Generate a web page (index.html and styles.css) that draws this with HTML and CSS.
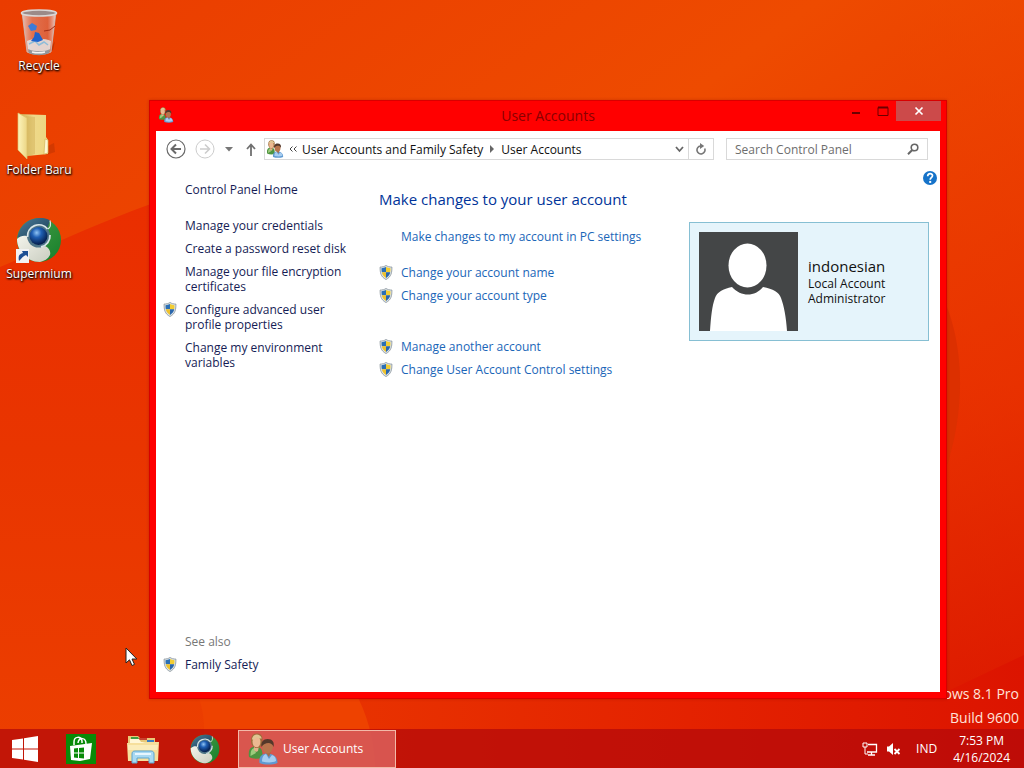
FILE: index.html
```html
<!DOCTYPE html>
<html lang="en">
<head>
  <meta charset="UTF-8" />
  <title>User Accounts</title>
  <link rel="stylesheet" href="styles.css">
</head>
<body>

  <!-- shared icons -->
  <svg class="sprite" aria-hidden="true">
    <defs>
      <radialGradient id="ball" cx="40%" cy="32%" r="65%">
        <stop offset="0" stop-color="#8fc4f5" />
        <stop offset="0.4" stop-color="#1f5fb4" />
        <stop offset="1" stop-color="#06204f" />
      </radialGradient>
      <linearGradient id="globe-top" x1="0" y1="0" x2="1" y2="1">
        <stop offset="0" stop-color="#4c7d9b" />
        <stop offset="1" stop-color="#16384f" />
      </linearGradient>
      <linearGradient id="globe-green" x1="0" y1="0" x2="1" y2="1">
        <stop offset="0" stop-color="#4f9e4a" />
        <stop offset="1" stop-color="#14802a" />
      </linearGradient>
      <linearGradient id="globe-white" x1="0" y1="0" x2="1" y2="1">
        <stop offset="0" stop-color="#f4f4ec" />
        <stop offset="1" stop-color="#c9cdc0" />
      </linearGradient>
      <linearGradient id="folder-front" x1="0" y1="0" x2="1" y2="0">
        <stop offset="0" stop-color="#fdf4bc" />
        <stop offset="1" stop-color="#ecd684" />
      </linearGradient>
      <linearGradient id="folder-back" x1="0" y1="0" x2="1" y2="0">
        <stop offset="0" stop-color="#c9a94c" />
        <stop offset="0.5" stop-color="#efd98a" />
        <stop offset="1" stop-color="#ecd680" />
      </linearGradient>
      <linearGradient id="bin-side" x1="0" y1="0" x2="1" y2="0">
        <stop offset="0" stop-color="#e9e4e4" stop-opacity="0.8" />
        <stop offset="0.3" stop-color="#d8a8a0" stop-opacity="0.5" />
        <stop offset="0.75" stop-color="#d08a80" stop-opacity="0.45" />
        <stop offset="1" stop-color="#f0eeee" stop-opacity="0.85" />
      </linearGradient>
    </defs>

    <symbol id="shield" viewBox="0 0 14 16">
      <path d="M7 .5C5.300 1.700 3.200 2.200.7 2.200c0 6 .6 10.300 6.300 13.300 5.700-3 6.300-7.300 6.300-13.300C10.800 2.200 8.700 1.700 7 .5z" fill="#dfe6ea" stroke="#8b969d" stroke-width="0.9" />
      <path d="M7 2.200C5.500 3 4 3.400 2.200 3.500c0 1.600 0 3 .3 4.300H7z" fill="#2b6fb5" />
      <path d="M7 2.200c1.500.8 3 1.200 4.800 1.300 0 1.600 0 3-.3 4.300H7z" fill="#f2cd33" />
      <path d="M2.500 7.800H7v6C4.500 12.300 3 10.500 2.500 7.800z" fill="#eec12c" />
      <path d="M11.500 7.800H7v6c2.500-1.500 4-3.300 4.500-6z" fill="#2a66ab" />
    </symbol>

    <symbol id="users" viewBox="0 0 32 32">
      <path d="M2 24c-1-7 1-10 6-10.500 6 0 8 3 7.500 11.500C11 26 6 26 2 24z" fill="#4e9440" />
      <path d="M3.500 23c0-5 1-7 3.500-8l2 5z" fill="#9dcb7c" />
      <path d="M7 13h5l-1 5-2 1-2-2z" fill="#e2b08a" />
      <path d="M4 8c0-5 2-7.500 6-7.500S16 3 15.500 8.500C15.500 12 13.500 15 10 15S4 12 4 8z" fill="#a06c3a" />
      <ellipse cx="9.500" cy="8.800" rx="4" ry="5.500" fill="#ecb891" />
      <path d="M4.800 6.500c1-4 3-5 5-5s4 1 5 4c-3 0-4-.5-5-1.500-1 1.500-3 2.500-5 2.500z" fill="#dfc592" />
      <path d="M12.500 30c-1-6 2-9.500 8-9.500s10 3.500 10 9.500c-5 2-13 2-18 0z" fill="#5f9ad2" />
      <path d="M15 28.500c0-4 1-6.500 4-7.500l3 5 3-4c3 1 4 3 4 6-4 2-9 1.500-14 .5z" fill="#a8cdf0" />
      <path d="M18 18.500h6l-2 5.500z" fill="#a96a46" />
      <ellipse cx="20.500" cy="14" rx="5.300" ry="6.500" fill="#b8744c" />
      <path d="M14.500 14c-1-5 2-8 6-8 5 0 7 3 6 8-1-3-3-4-5-4-3 0-5 1-7 4z" fill="#54382a" />
    </symbol>

    <symbol id="supermium" viewBox="0 0 46 46">
      <circle cx="23" cy="23" r="22" fill="url(#globe-green)" />
      <path d="M1.500 20C4 7 14 1 24 1c4 0 7 .6 10 2.500L31 12c-7-6-17-2-18 6l-2 6c-4-1-7-2-9.500-4z" fill="url(#globe-top)" />
      <path d="M1 22c4-4 9-4 11-2 1 8 9 12 17 9 4 2 6 5 5 9-2 4-6 6-10 7C11 45 1 34 1 22z" fill="url(#globe-white)" />
      <circle cx="22.500" cy="19" r="11.500" fill="#4d7488" />
      <path d="M11.500 20a11.300 11.300 0 0 1 20-8M34 18a11.500 11.500 0 0 1-9 12" fill="none" stroke="#d9e5e8" stroke-width="1.800" />
      <circle cx="22.500" cy="19" r="9" fill="url(#ball)" />
      <path d="M32 12c3-2 3-5 2-8.500" fill="none" stroke="#d9e5e8" stroke-width="1.200" />
    </symbol>
  </svg>

  <div class="desktop">

    <svg class="wallpaper" viewBox="0 0 1024 768" preserveAspectRatio="none" aria-hidden="true">
      <defs>
        <linearGradient id="sky" x1="0" y1="0" x2="1" y2="1">
          <stop offset="0" stop-color="#ea3c00" />
          <stop offset="0.4" stop-color="#ee4b00" />
          <stop offset="0.75" stop-color="#e83200" />
          <stop offset="1" stop-color="#da1800" />
        </linearGradient>
        <linearGradient id="hill" x1="0" y1="0" x2="0" y2="1">
          <stop offset="0" stop-color="#ea2e00" />
          <stop offset="0.45" stop-color="#e93500" />
          <stop offset="1" stop-color="#ec3f00" />
        </linearGradient>
        <linearGradient id="right-side" x1="0" y1="0" x2="0" y2="1">
          <stop offset="0" stop-color="#ee4a00" />
          <stop offset="0.5" stop-color="#e83000" />
          <stop offset="1" stop-color="#da1000" />
        </linearGradient>
        <linearGradient id="floor" x1="0" y1="0" x2="1" y2="0">
          <stop offset="0" stop-color="#e83200" />
          <stop offset="0.5" stop-color="#e42200" />
          <stop offset="1" stop-color="#dc1400" />
        </linearGradient>
      </defs>
      <rect width="1024" height="768" fill="url(#sky)" />
      <path d="M0 267C50 246 95 224 148 205C300 160 500 200 600 400V768H0z" fill="url(#hill)" />
      <path d="M900 0h124v768H900z" fill="url(#right-side)" opacity="0.5" />
      <path d="M900 240C975 300 985 440 900 560z" fill="#dc3000" />
      <path d="M200 768C206 735 206 715 196 690H380V768z" fill="#ee4200" />
      <path d="M375 768C374 740 368 715 354 690H950L1024 655V768z" fill="url(#floor)" />
    </svg>

    <p class="watermark">Windows 8.1 Pro<br>Build 9600</p>

    <nav class="shortcuts">
      <a href="#" class="shortcut">
        <svg class="shortcut-icon" viewBox="0 0 48 48" aria-hidden="true">
          <path d="M33 45l5-3 2-9z" fill="#8c2200" opacity="0.4" />
          <path d="M7 4h34l-5 40c-6 3-18 3-24 0z" fill="url(#bin-side)" stroke="#c8c2c2" stroke-width="0.800" />
          <path d="M12 33c6-3 18-3 24 0l-1 9c-6 3-16 3-22 0z" fill="#e4e6e8" opacity="0.85" />
          <path d="M14 36l6-3 4 4 5-3 4 3" fill="none" stroke="#8fbcd8" stroke-width="1.500" />
          <path d="M13 18l4-3 5 3-1 4-5 1z" fill="#3b7bd8" />
          <path d="M20 24l4 1 4 7-5 2-7-1 3-4z" fill="#1f62cc" />
          <path d="M29 23l6-1 5-4" stroke="#a02c14" stroke-width="1" fill="none" />
          <ellipse cx="24" cy="5" rx="17.500" ry="3" fill="#9b8a88" stroke="#d9d7d7" stroke-width="1.600" />
          <path d="M13 41c6 3 17 3 22 0l-1 4c-5 3-15 3-20 0z" fill="#93969a" />
          <path d="M17 44c4 1 9 1 13 0" stroke="#f4f4f4" stroke-width="1.500" fill="none" />
        </svg>
        <span>Recycle</span>
      </a>
      <a href="#" class="shortcut">
        <svg class="shortcut-icon" viewBox="0 0 48 48" aria-hidden="true">
          <path d="M31 43l9-3-1-9-8 4z" fill="#8c2200" opacity="0.25" />
          <path d="M3 2l28 1v22l2 3v14l-21 2z" fill="url(#folder-back)" />
          <path d="M11 4l9 1v37l-9 3z" fill="#cfae55" opacity="0.45" />
          <path d="M3 1l9 5v41L3 38z" fill="url(#folder-front)" stroke="#dcc06a" stroke-width="0.700" />
          <path d="M30 27l3 1v13l-4 1z" fill="#fff7d0" stroke="#d2b45c" stroke-width="0.700" />
        </svg>
        <span>Folder Baru</span>
      </a>
      <a href="#" class="shortcut">
        <svg class="shortcut-icon" viewBox="0 0 48 48" aria-hidden="true">
          <use href="#supermium" x="1" y="1" width="46" height="46" />
          <rect x="1" y="33" width="13" height="14" fill="#f2f2f2" />
          <path d="M4 45c-1-5 0-7 4-8l-1-2h6v6l-2-2c-3 1-4 3-7 6z" fill="#1d4f93" />
        </svg>
        <span>Supermium</span>
      </a>
    </nav>

    <main class="window">
      <header class="titlebar">
        <svg class="title-icon" aria-hidden="true"><use href="#users" /></svg>
        <span class="title">User Accounts</span>
        <div class="window-buttons">
          <button type="button" aria-label="Minimize"><svg width="10" height="10"><path d="M1 7h8" stroke="#6b0000" stroke-width="2" /></svg></button>
          <button type="button" aria-label="Maximize"><svg width="12" height="10"><path d="M1 1.500h10v8H1z" fill="none" stroke="#6b0000" /><path d="M1 1.500h10" stroke="#6b0000" stroke-width="2" /></svg></button>
          <button type="button" class="close" aria-label="Close"><svg width="10" height="10"><path d="M1.500 1.500l7 7M8.500 1.500l-7 7" stroke="#fff" stroke-width="1.700" /></svg></button>
        </div>
      </header>

      <div class="client">
        <div class="navbar">
          <button type="button" class="round" aria-label="Back">
            <svg width="20" height="20" fill="none" stroke="#6a6a6a"><circle cx="10" cy="10" r="9" stroke-width="1.200" /><path d="M15 10H6M10 5.500L5.500 10l4.500 4.500" stroke-width="2" /></svg>
          </button>
          <button type="button" class="round forward" aria-label="Forward">
            <svg width="20" height="20" fill="none" stroke="#cdcdcd"><circle cx="10" cy="10" r="9" /><path d="M5 10h9M10 5.500l4.500 4.500-4.500 4.500" stroke-width="1.600" /></svg>
          </button>
          <button type="button" class="recent" aria-label="Recent locations">
            <svg width="8" height="5"><path d="M0 0h8L4 4.500z" fill="#777" /></svg>
          </button>
          <button type="button" class="up" aria-label="Up">
            <svg width="10" height="13" fill="none" stroke="#707070" stroke-width="1.800"><path d="M5 13V2M1 6l4-4.500L9 6" /></svg>
          </button>
          <div class="address">
            <svg class="address-icon" aria-hidden="true"><use href="#users" /></svg>
            <button type="button" class="more" aria-label="Show parent folders">
              <svg width="8" height="6" fill="none" stroke="#444"><path d="M3.500.5L1 3l2.500 2.500M7.500.5L5 3l2.500 2.500" /></svg>
            </button>
            <a href="#">User Accounts and Family Safety</a>
            <svg class="crumb-arrow" width="4" height="8" aria-hidden="true"><path d="M0 0l4 4-4 4z" fill="#666" /></svg>
            <a href="#">User Accounts</a>
            <button type="button" class="history" aria-label="Previous locations">
              <svg width="9" height="7" fill="none" stroke="#666" stroke-width="1.800"><path d="M1 1l3.500 4L8 1" /></svg>
            </button>
            <button type="button" class="refresh" aria-label="Refresh">
              <svg width="12" height="12" fill="none" stroke="#777" stroke-width="1.600"><path d="M9.700 5.500A4 4 0 1 1 5.500 3" /><path d="M5 0l4.200 3L5 6z" fill="#777" stroke="none" /></svg>
            </button>
          </div>
          <form class="search">
            <input type="text" placeholder="Search Control Panel" aria-label="Search Control Panel">
            <button type="button" aria-label="Search">
              <svg width="12" height="12" fill="none" stroke="#666"><circle cx="7.500" cy="4.500" r="3.300" stroke-width="1.600" /><path d="M5.200 7L1 11.200" stroke-width="2" /></svg>
            </button>
          </form>
        </div>

        <div class="content">
          <aside class="sidebar">
            <a href="#" class="home">Control Panel Home</a>
            <ul class="tasks">
              <li><a href="#">Manage your credentials</a></li>
              <li><a href="#">Create a password reset disk</a></li>
              <li><a href="#">Manage your file encryption certificates</a></li>
              <li><svg class="shield" aria-hidden="true"><use href="#shield" /></svg><a href="#">Configure advanced user profile properties</a></li>
              <li><a href="#">Change my environment variables</a></li>
            </ul>
            <div class="see-also">
              <span>See also</span>
              <ul class="tasks">
                <li><svg class="shield" aria-hidden="true"><use href="#shield" /></svg><a href="#">Family Safety</a></li>
              </ul>
            </div>
          </aside>

          <section class="page">
            <button type="button" class="help" aria-label="Help">
              <svg width="14" height="14"><circle cx="7" cy="7" r="7" fill="#1673c9" /><path d="M4.700 5.200c0-3.300 5-3.200 4.800-.4C9.400 6.700 7.200 6.700 7.200 8.700" fill="none" stroke="#fff" stroke-width="1.700" /><rect x="6.200" y="9.900" width="2" height="2" fill="#fff" /></svg>
            </button>
            <h1>Make changes to your user account</h1>
            <div class="columns">
              <div class="actions">
                <ul>
                  <li><a href="#">Make changes to my account in PC settings</a></li>
                </ul>
                <ul>
                  <li><svg class="shield" aria-hidden="true"><use href="#shield" /></svg><a href="#">Change your account name</a></li>
                  <li><svg class="shield" aria-hidden="true"><use href="#shield" /></svg><a href="#">Change your account type</a></li>
                </ul>
                <ul class="other">
                  <li><svg class="shield" aria-hidden="true"><use href="#shield" /></svg><a href="#">Manage another account</a></li>
                  <li><svg class="shield" aria-hidden="true"><use href="#shield" /></svg><a href="#">Change User Account Control settings</a></li>
                </ul>
              </div>
              <div class="account">
                <svg class="avatar" viewBox="0 0 99 99" role="img" aria-label="Account picture">
                  <rect width="99" height="99" fill="#444647" />
                  <ellipse cx="48.500" cy="33.500" rx="19" ry="22" fill="#fff" />
                  <path d="M11 99c1-14 2-25 5-33 2-6 8-9 17-11 9 10 23 10 31 0 10 2 16 5 18 11 3 8 5 19 6 33z" fill="#fff" />
                </svg>
                <div>
                  <strong>indonesian</strong>
                  <p>Local Account</p>
                  <p>Administrator</p>
                </div>
              </div>
            </div>
          </section>
        </div>
      </div>
    </main>

    <svg class="cursor" width="13" height="20" aria-hidden="true">
      <path d="M1 1v15l3.500-3.200L7 18.500l2.500-1.100L7 12h4.800z" fill="#fff" stroke="#222" />
    </svg>

    <footer class="taskbar">
      <button type="button" class="start" aria-label="Start">
        <svg width="26" height="26"><path d="M0 4l11-1.600V12.400H0zM12 2.200L26 0v12.400H12zM0 13.500h11v10L0 22zM12 13.500h14V26l-14-2.300z" fill="#fff" /></svg>
      </button>
      <button type="button" class="pinned" aria-label="Store">
        <svg width="30" height="30">
          <rect width="30" height="30" fill="#098a08" />
          <path d="M8 11V8c0-6 7-6 8-1v2M12 9c1-6 8-6 8 1" fill="none" stroke="#fff" stroke-width="1.500" />
          <path d="M4 12l22-3-2 16-10 2-9-1z" fill="#fff" />
          <path d="M8 14.500l4-.5v4.500H8zM13 14l5-.5v5h-5zM8 19.500h4V24l-4-.5zM13 19.500h5v5l-5-.5z" fill="#098a08" />
        </svg>
      </button>
      <button type="button" class="pinned" aria-label="File Explorer">
        <svg width="32" height="30">
          <path d="M1 2h10l2 2h15v6h2v17H1z" fill="#e8c978" />
          <path d="M4 3h7l1 2H4z" fill="#3f9c43" /><path d="M12 4h8v2h-8z" fill="#c94331" /><path d="M20 6h7v2h-7z" fill="#3b7fc2" />
          <path d="M3 5h9l2 3h14v4H3z" fill="#fff6d6" />
          <path d="M0 9h15l3-1h14l-1 19H1z" fill="#f6df9c" />
          <path d="M1 11h30l-1 5H1z" fill="#fbecba" />
          <path d="M5 29V20c0-2 1-3 3-3h16c2 0 3 1 3 3v9h-5v-5H10v5z" fill="#a9d9f2" stroke="#5ba4cf" />
          <path d="M8 19h16v2H8z" fill="#e7f6ff" />
        </svg>
      </button>
      <button type="button" class="pinned" aria-label="Supermium">
        <svg width="30" height="30"><use href="#supermium" width="30" height="30" /></svg>
      </button>
      <button type="button" class="task">
        <svg width="32" height="32" aria-hidden="true"><use href="#users" /></svg>
        <span>User Accounts</span>
      </button>

      <div class="tray">
        <button type="button" aria-label="Network">
          <svg width="16" height="14" fill="none" stroke="#fff"><path d="M6 2.500h8.500v7.500H5" stroke-width="1.300" /><path d="M9.500 10v3M6 13h7" stroke-width="1.300" /><path d="M1 1h4v4H1zM3 5v7h3" /></svg>
        </button>
        <button type="button" aria-label="Volume muted">
          <svg width="16" height="14"><path d="M1 4.500h2L7 1v12L3 9.500H1z" fill="#fff" /><path d="M8.500 7l5 5M13.500 7l-5 5" stroke="#fff" stroke-width="1.800" /></svg>
        </button>
        <button type="button" class="language">IND</button>
        <button type="button" class="clock">7:53 PM<br>4/16/2024</button>
      </div>
    </footer>
  </div>

</body>
</html>
```
FILE: styles.css
```css
* {
  box-sizing: border-box;
}

body {
  margin: 0;
  font-family: "Open Sans", "Noto Sans", sans-serif;
  font-size: 12px;
  line-height: 15px;
  color: #111;
  overflow: hidden;
}

ul {
  list-style: none;
  margin: 0;
  padding: 0;
}

p {
  margin: 0;
}

a {
  color: inherit;
  text-decoration: none;
}

button {
  display: flex;
  align-items: center;
  justify-content: center;
  padding: 0;
  border: none;
  background: none;
  font: inherit;
  color: inherit;
}

svg {
  display: block;
  flex-shrink: 0;
}

.sprite {
  position: absolute;
  width: 0;
  height: 0;
}

/* desktop */
.desktop {
  position: relative;
  display: flex;
  flex-direction: column;
  justify-content: space-between;
  height: 100vh;
  background-color: #ea3c00;
}

.wallpaper {
  position: absolute;
  width: 100%;
  height: 100%;
}

.watermark {
  position: absolute;
  right: 5px;
  bottom: 38px;
  color: #ffe3da;
  font-size: 14px;
  line-height: 24px;
  text-align: right;
}

.shortcuts {
  position: relative;
  display: flex;
  flex-direction: column;
  gap: 30px;
  width: 78px;
  padding-top: 8px;
}

.shortcut {
  display: flex;
  flex-direction: column;
  align-items: center;
  gap: 2px;
  height: 74px;
  color: #fff;
  text-shadow: 1px 1px 2px #000, 0 1px 2px #000;
}

.shortcut-icon {
  width: 48px;
  height: 48px;
}

.cursor {
  position: absolute;
  left: 125px;
  top: 647px;
}

/* window */
.window {
  position: absolute;
  top: 100px;
  right: 77px;
  bottom: 69px;
  left: 149px;
  display: flex;
  flex-direction: column;
  padding: 0 6px 6px;
  border: 1px solid #d80000;
  background-color: #ff0000;
  box-shadow: 0 0 3px rgba(120, 0, 0, 0.3);
}

.titlebar {
  display: grid;
  grid-template-columns: 1fr auto 1fr;
  height: 30px;
}

.title-icon {
  width: 16px;
  height: 16px;
  margin: 6px 2px;
}

.title {
  color: #8a0000;
  font-size: 14px;
  line-height: 30px;
}

.window-buttons {
  display: flex;
  justify-content: flex-end;
  margin-right: -1px;
}

.window-buttons button {
  width: 27px;
  height: 20px;
}

.window-buttons .close {
  width: 45px;
  background-color: #cc4a4a;
}

.client {
  flex: 1;
  display: flex;
  flex-direction: column;
  background-color: #fff;
}

.navbar {
  display: flex;
  align-items: center;
  padding: 7px 12px 0 10px;
}

.forward {
  margin-left: 9px;
}

.recent {
  width: 28px;
  height: 20px;
}

.up {
  width: 16px;
  height: 20px;
  margin-right: 5px;
}

.address,
.search {
  display: flex;
  align-items: center;
  height: 22px;
  border: 1px solid #d9d9d9;
}

.address {
  flex: 1;
}

.address-icon {
  width: 18px;
  height: 18px;
  margin-left: 1px;
}

.more {
  width: 18px;
  height: 20px;
}

.crumb-arrow {
  margin: 0 7px;
}

.history {
  width: 18px;
  height: 20px;
  margin-left: auto;
}

.refresh {
  width: 25px;
  height: 20px;
  border-left: 1px solid #d9d9d9;
}

.search {
  width: 202px;
  margin-left: 12px;
}

.search input {
  flex: 1;
  min-width: 0;
  padding: 0 0 0 8px;
  border: none;
  outline: none;
  background: none;
  font: inherit;
}

.search input::placeholder {
  color: #6d6d6d;
}

.search button {
  width: 28px;
  height: 20px;
}

/* left side */
.content {
  flex: 1;
  display: flex;
}

.sidebar {
  display: flex;
  flex-direction: column;
  width: 223px;
  padding: 22px 28px 20px 29px;
  color: #151c55;
}

.home {
  margin-bottom: 21px;
}

.tasks {
  display: flex;
  flex-direction: column;
  gap: 8px;
}

.tasks li,
.actions li {
  display: flex;
}

.shield {
  width: 14px;
  height: 15px;
  margin-right: 8px;
}

.tasks .shield {
  margin-left: -22px;
}

.see-also {
  display: flex;
  flex-direction: column;
  gap: 8px;
  margin-top: auto;
  color: #777;
}

.see-also a {
  color: #151c55;
}

/* right side */
.page {
  flex: 1;
  display: flex;
  flex-direction: column;
  padding-top: 11px;
}

.help {
  align-self: flex-end;
  margin-right: 3px;
}

h1 {
  margin: 3px 0 12px;
  color: #003399;
  font-size: 15px;
  font-weight: normal;
  line-height: 22px;
}

.columns {
  display: flex;
  justify-content: space-between;
  align-items: flex-start;
  padding-right: 11px;
}

.actions {
  padding-top: 7px;
  color: #1a66b8;
}

.actions ul {
  display: flex;
  flex-direction: column;
  gap: 8px;
  margin-bottom: 21px;
}

.actions a:first-child {
  margin-left: 22px;
}

.actions .other {
  margin-top: 36px;
}

.account {
  display: flex;
  align-items: center;
  gap: 10px;
  width: 240px;
  padding: 9px;
  border: 1px solid #86bfd3;
  background-color: #e5f4fb;
}

.avatar {
  width: 99px;
  height: 99px;
}

.account strong {
  display: block;
  font-size: 15px;
  font-weight: normal;
  line-height: 19px;
}

/* taskbar */
.taskbar {
  position: relative;
  display: flex;
  align-items: center;
  height: 39px;
  background-color: rgba(180, 10, 10, 0.75);
  color: #fff;
}

.start {
  width: 50px;
  height: 39px;
}

.pinned {
  width: 62px;
  height: 39px;
}

.task {
  justify-content: flex-start;
  gap: 4px;
  width: 158px;
  height: 38px;
  margin-left: 2px;
  padding-left: 8px;
  border: 1px solid #f3b9a8;
  background-color: rgba(240, 150, 150, 0.5);
}

.tray {
  display: flex;
  align-items: center;
  gap: 8px;
  margin-left: auto;
  padding-right: 14px;
}

.language {
  margin-left: 6px;
}

.clock {
  margin-left: 8px;
  line-height: 17px;
}
```
